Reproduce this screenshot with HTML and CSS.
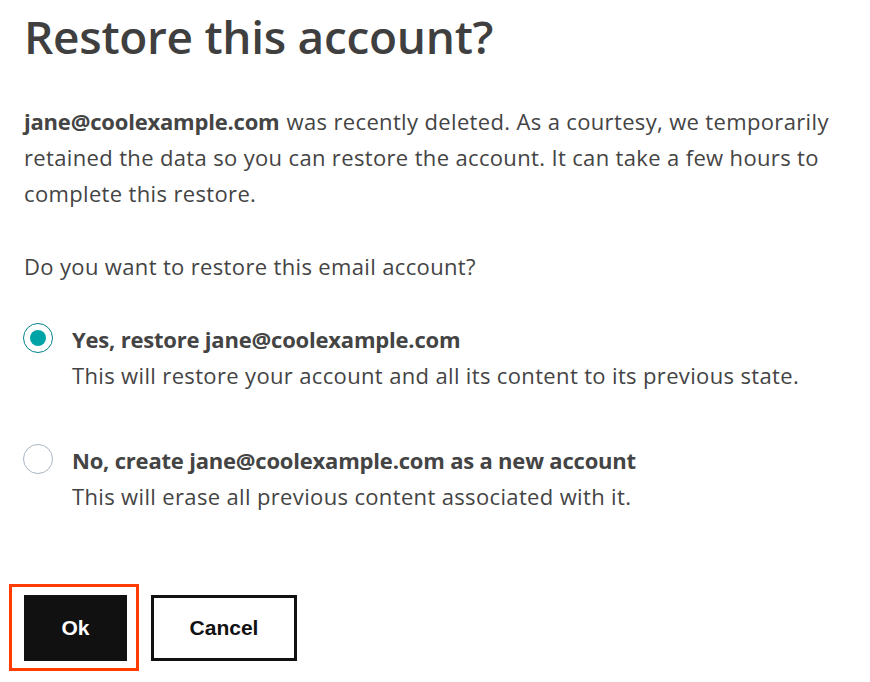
FILE: index.html
```html
<!DOCTYPE html>
<html lang="en">
<head>
<meta charset="utf-8">
<title>Restore this account?</title>
<link rel="stylesheet" href="styles.css">
</head>
<body>
<main class="dialog">
  <h1 class="title">Restore this account?</h1>
  <p class="intro"><strong>jane@coolexample.com</strong> was recently deleted. As a courtesy, we temporarily retained the data so you can restore the account. It can take a few hours to complete this restore.</p>
  <p class="question">Do you want to restore this email account?</p>
  <div class="options">
    <label class="option">
      <span class="radio checked"><span class="dot"></span></span>
      <span class="option-text">
        <span class="option-title">Yes, restore jane@coolexample.com</span>
        <span class="option-desc">This will restore your account and all its content to its previous state.</span>
      </span>
    </label>
    <label class="option">
      <span class="radio"></span>
      <span class="option-text">
        <span class="option-title">No, create jane@coolexample.com as a new account</span>
        <span class="option-desc">This will erase all previous content associated with it.</span>
      </span>
    </label>
  </div>
  <div class="actions">
    <span class="focus-ring"><button class="btn btn-primary" type="button">Ok</button></span>
    <button class="btn btn-secondary" type="button">Cancel</button>
  </div>
</main>
</body>
</html>
```
FILE: styles.css
```css
* { box-sizing: border-box; }
html, body { margin: 0; padding: 0; background: #fff; }
body {
  font-family: "Open Sans", "Noto Sans", sans-serif;
  color: #444;
}
.dialog {
  padding: 6px 24px 0 24px;
  max-width: 860px;
}
.title {
  margin: 0;
  font-size: 46px;
  line-height: 60px;
  font-weight: 600;
  color: #3f3f3f;
  letter-spacing: -0.3px;
}
.intro {
  margin: 37px 0 0 0;
  font-size: 22px;
  line-height: 36px;
  letter-spacing: 0.35px;
  color: #444;
}
.intro strong {
  font-weight: 700;
  letter-spacing: -0.2px;
  margin-right: 1px;
}
.question {
  margin: 37px 0 0 0;
  font-size: 22px;
  line-height: 36px;
  letter-spacing: 0.35px;
}
.options {
  margin-top: 37px;
  display: flex;
  flex-direction: column;
  gap: 49px;
}
.option {
  display: flex;
  align-items: flex-start;
  gap: 18px;
}
.radio {
  width: 30px;
  height: 30px;
  border-radius: 50%;
  border: 1.5px solid #aab6c2;
  display: flex;
  align-items: center;
  justify-content: center;
  flex: none;
  margin-top: 2px;
  margin-left: -1px;
}
.radio.checked { border-color: #00838c; }
.dot {
  width: 16px;
  height: 16px;
  border-radius: 50%;
  background: #00a4a6;
}
.option-text {
  display: flex;
  flex-direction: column;
  margin-left: 1px;
}
.option-title {
  font-size: 22px;
  line-height: 36px;
  font-weight: 700;
  letter-spacing: -0.2px;
  color: #444;
}
.option-desc {
  font-size: 22px;
  line-height: 36px;
  letter-spacing: 0.35px;
  color: #444;
}
.actions {
  margin-top: 70px;
  display: flex;
  align-items: center;
  gap: 12px;
  margin-left: -15px;
}
.focus-ring {
  display: inline-flex;
  padding: 8px 9px 7px 12px;
  border: 3px solid #ff3b00;
}
.btn {
  font-family: "Liberation Sans", Arial, sans-serif;
  font-size: 21px;
  font-weight: 700;
  height: 66px;
  cursor: pointer;
}
.btn-primary {
  width: 103px;
  background: #111;
  color: #fff;
  border: none;
}
.btn-secondary {
  width: 146px;
  background: #fff;
  color: #111;
  border: 3px solid #111;
}
```
